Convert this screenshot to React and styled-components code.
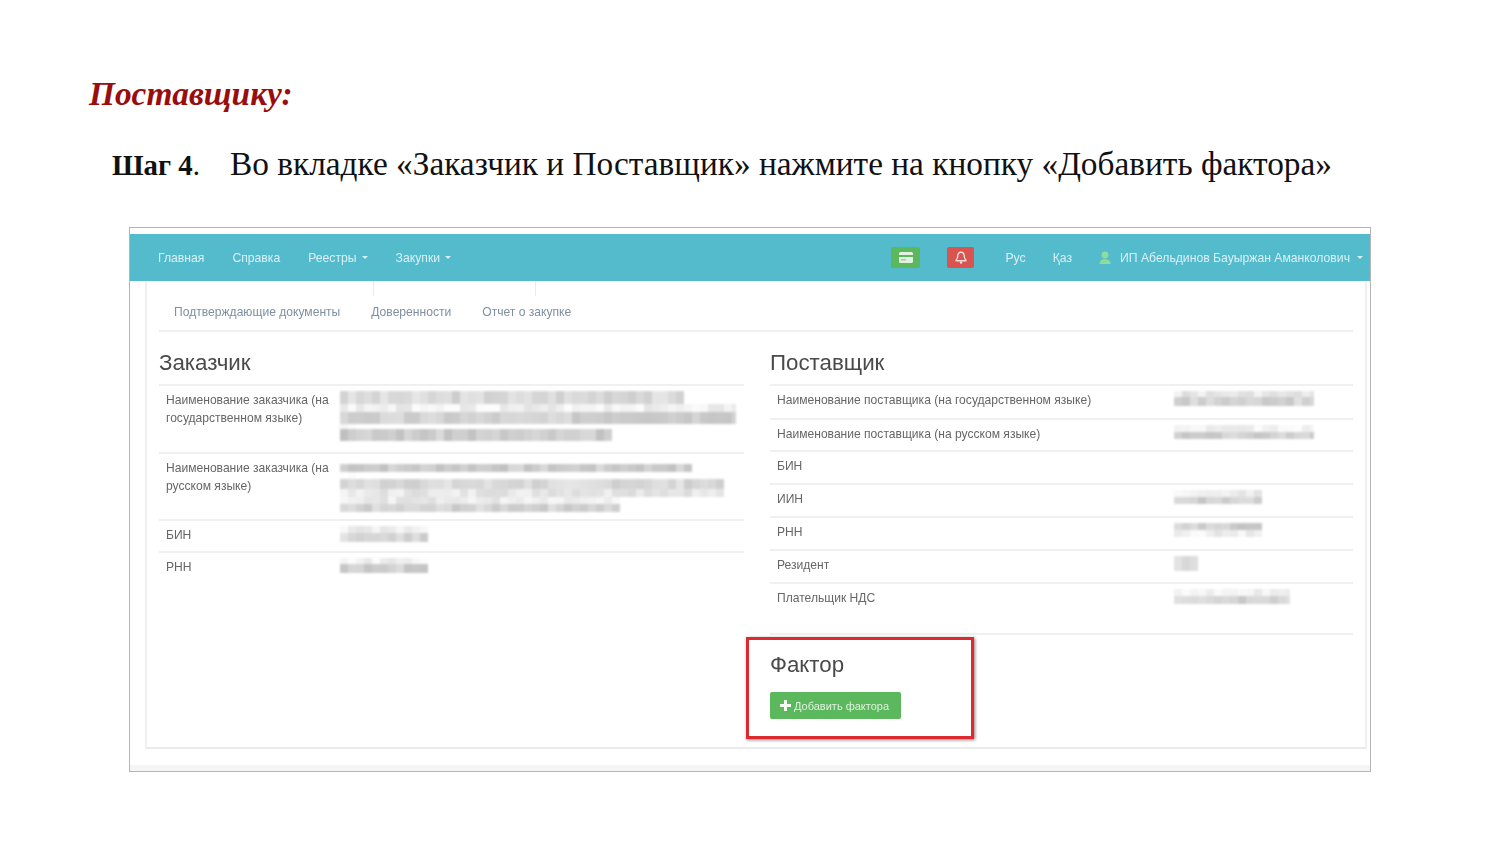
import React from "react";
import styled, { createGlobalStyle } from "styled-components";

const GlobalStyle = createGlobalStyle`
  html, body {
    margin: 0;
    padding: 0;
    background: #fff;
  }
`;

const Slide = styled.div`
  width: 1500px;
  height: 844px;
  overflow: hidden;
  box-sizing: border-box;
  padding: 74px 129px 0 89px;
  font-family: "Liberation Serif", serif;
  color: #111;
`;

const Heading = styled.h1`
  margin: 0;
  font-size: 33.33px;
  line-height: 40px;
  font-style: italic;
  font-weight: bold;
  color: #990d0d;
`;

const StepLine = styled.div`
  display: flex;
  align-items: baseline;
  margin: 30px 0 0 23px;
  font-size: 33.33px;
  line-height: 40px;
`;

const StepLabel = styled.span`
  width: 118px;
  flex: none;
  font-size: 28.8px;
  b {
    font-weight: bold;
  }
`;

const Shot = styled.div`
  width: 1242px;
  height: 545px;
  margin: 42px 0 0 40px;
  box-sizing: border-box;
  border: 1px solid #b5b5b5;
  padding-top: 6px;
  background: linear-gradient(#fff 0, #fff 537px, #f5f5f5 537px);
  font-family: "Liberation Sans", sans-serif;
  overflow: hidden;
`;

const Nav = styled.nav`
  height: 47px;
  background: #53bbcc;
  display: flex;
  align-items: center;
  padding: 0 7px 0 28px;
  font-size: 12.2px;
  color: #d9f0f4;
  filter: blur(0.55px);
`;

const NavItem = styled.span`
  margin-right: ${(p) => p.$gap ?? 28}px;
  margin-left: ${(p) => p.$left ?? 0}px;
  display: inline-flex;
  align-items: center;
  white-space: nowrap;
`;

const Caret = styled.i`
  display: inline-block;
  margin-left: ${(p) => p.$left ?? 5}px;
  border-top: 3.5px solid currentColor;
  border-left: 3.5px solid transparent;
  border-right: 3.5px solid transparent;
`;

const Spacer = styled.div`
  flex: 1;
`;

const Badge = styled.span`
  width: ${(p) => p.$w}px;
  height: 21px;
  margin-right: ${(p) => p.$gap}px;
  border-radius: 2px;
  background: ${(p) => p.$bg};
  display: flex;
  align-items: center;
  justify-content: center;
`;

const Panel = styled.div`
  width: 1222px;
  height: 468px;
  margin-left: 15px;
  box-sizing: border-box;
  border-left: 2px solid #efefef;
  border-right: 2px solid #efefef;
  border-bottom: 2px solid #ebebeb;
  padding: 0 12px 0 12px;
  filter: blur(0.5px);
`;

const Ticks = styled.div`
  height: 15px;
  display: flex;
`;

const Tick = styled.span`
  width: 1px;
  height: 15px;
  margin-left: ${(p) => p.$x}px;
  background: #e9ecef;
`;

const Tabs = styled.div`
  height: 36px;
  box-sizing: border-box;
  border-bottom: 2px solid #f0f0f0;
  display: flex;
  padding: 8px 0 0 15px;
  font-size: 12.1px;
  line-height: 16px;
  color: #7e8fa0;
`;

const Tab = styled.span`
  margin-right: 31px;
`;

const Columns = styled.div`
  display: grid;
  grid-template-columns: 585px 583px;
  column-gap: 26px;
`;

const Column = styled.section`
  position: relative;
`;

const SectionTitle = styled.h2`
  margin: 0;
  height: 52px;
  box-sizing: border-box;
  padding-top: ${(p) => p.$top ?? 17}px;
  font-size: 22.3px;
  line-height: 28px;
  font-weight: normal;
  color: #4a4a4a;
`;

const Row = styled.div`
  display: flex;
  box-sizing: border-box;
  height: ${(p) => p.$h}px;
  border-top: 2px solid #f0f0f0;
  font-size: 12.08px;
  line-height: 18px;
  color: #666;
`;

const Label = styled.div`
  width: ${(p) => p.$w}px;
  flex: none;
  padding: 5px 0 0 7px;
  box-sizing: border-box;
`;

const Value = styled.div`
  padding-top: ${(p) => p.$top ?? 5}px;
`;

const Closing = styled.div`
  height: 53px;
  box-sizing: border-box;
  border-top: 2px solid #f0f0f0;
  border-bottom: 2px solid #f0f0f0;
  padding: 5px 0 0 7px;
  font-size: 12.08px;
  line-height: 18px;
  color: #666;
  display: flex;
`;

const ClosingLabel = styled.span`
  width: 397px;
  flex: none;
`;

const AddButton = styled.button`
  display: flex;
  align-items: center;
  gap: 3px;
  width: 131px;
  height: 27px;
  margin-top: 5px;
  padding: 0 0 0 10px;
  border: 0;
  border-radius: 2px;
  background: #5cb85c;
  color: #dff1df;
  font-family: inherit;
  font-size: 11px;
`;

const Highlight = styled.div`
  position: absolute;
  left: -24px;
  top: 305px;
  width: 228px;
  height: 102px;
  box-sizing: border-box;
  border: 3px solid #dc2a2e;
  box-shadow: 1px 1px 3px rgba(60, 20, 20, 0.55);
  pointer-events: none;
`;

// blurred out values, a band is a line of mosaic cells
const CELL = 8;
const Blur = styled.svg`
  display: block;
  filter: blur(1.1px);
`;

const Mosaic = ({ bands, seed = 1, width }) => {
  let s = seed * 9301 + 49297;
  const rnd = () => {
    s = (s * 9301 + 49297) % 233280;
    return s / 233280;
  };
  const height = bands.reduce((sum, b) => sum + b.h, 0);
  let y = 0;
  const cells = [];
  bands.forEach((b, i) => {
    for (let x = b.x || 0; x < b.w; x += CELL) {
      const v = Math.round(b.tone + rnd() * 26 - 13);
      const fill = `rgb(${v},${v},${v})`;
      cells.push(
        <rect key={`${i}-${x}`} x={x} y={y} width={CELL} height={b.h} fill={fill} />
      );
    }
    y += b.h;
  });
  return (
    <Blur width={width} height={height} viewBox={`0 0 ${width} ${height}`}>
      {cells}
    </Blur>
  );
};

const CardIcon = () => (
  <svg width="14" height="11" viewBox="0 0 14 11">
    <rect x="0" y="0" width="14" height="11" rx="1.5" fill="#e3f2e0" />
    <rect x="0" y="3" width="14" height="2" fill="#5cb85c" />
    <rect x="2" y="7" width="5" height="1.5" fill="#9fd19f" />
  </svg>
);

const BellIcon = () => (
  <svg width="12" height="13" viewBox="0 0 12 13">
    <path
      d="M6 1.2c-2 0-3.2 1.5-3.2 3.4 0 2.3-.5 3.4-1.6 4.4v.8h9.6V9c-1.1-1-1.6-2.1-1.6-4.4C9.200 2.700 8 1.200 6 1.200z"
      fill="none"
      stroke="#f6dede"
      strokeWidth="1.400"
    />
    <circle cx="6" cy="11.500" r="1.200" fill="#f6dede" />
  </svg>
);

const UserIcon = () => (
  <svg width="14" height="14" viewBox="0 0 14 14">
    <circle cx="7" cy="4" r="3.400" fill="#8fdc9a" />
    <path d="M1.500 13c0-3.200 2.400-4.800 5.500-4.800s5.500 1.600 5.500 4.800z" fill="#8fdc9a" />
  </svg>
);

const PlusIcon = () => (
  <svg width="11" height="11" viewBox="0 0 11 11">
    <path d="M4 0h3v4h4v3H7v4H4V7H0V4h4z" fill="#f2faf2" />
  </svg>
);

const buyerRows = [
  {
    h: 68,
    label: "Наименование заказчика (на государственном языке)",
    seed: 3,
    bands: [
      { h: 13, w: 341, tone: 218 },
      { h: 8, w: 396, tone: 240 },
      { h: 12, w: 396, tone: 210 },
      { h: 5, w: 10, tone: 252 },
      { h: 12, w: 272, tone: 205 },
    ],
  },
  {
    h: 67,
    label: "Наименование заказчика (на русском языке)",
    seed: 7,
    top: 10,
    bands: [
      { h: 8, w: 349, tone: 205 },
      { h: 7, w: 10, tone: 252 },
      { h: 10, w: 381, tone: 218 },
      { h: 8, w: 381, tone: 232 },
      { h: 7, w: 280, tone: 235 },
      { h: 8, w: 280, tone: 212 },
    ],
  },
  {
    h: 32,
    label: "БИН",
    seed: 11,
    bands: [
      { h: 7, w: 86, tone: 238 },
      { h: 9, w: 86, tone: 215 },
    ],
  },
  {
    h: 33,
    label: "РНН",
    seed: 13,
    bands: [
      { h: 6, w: 86, tone: 242 },
      { h: 9, w: 86, tone: 208 },
    ],
  },
];

const supplierRows = [
  {
    label: "Наименование поставщика (на государственном языке)",
    h: 34,
    seed: 17,
    bands: [
      { h: 6, w: 140, tone: 232 },
      { h: 9, w: 140, tone: 212 },
    ],
  },
  {
    label: "Наименование поставщика (на русском языке)",
    h: 32,
    seed: 19,
    bands: [
      { h: 7, w: 140, tone: 240 },
      { h: 7, w: 140, tone: 210 },
    ],
  },
  { label: "БИН", h: 33 },
  {
    label: "ИИН",
    h: 33,
    seed: 23,
    bands: [
      { h: 7, w: 86, tone: 238 },
      { h: 7, w: 86, tone: 208 },
    ],
  },
  {
    label: "РНН",
    h: 33,
    seed: 29,
    bands: [
      { h: 7, w: 86, tone: 208 },
      { h: 7, w: 86, tone: 240 },
    ],
  },
  {
    label: "Резидент",
    h: 33,
    seed: 31,
    bands: [{ h: 15, w: 22, tone: 224 }],
  },
];

const App = () => (
  <Slide>
    <GlobalStyle />
    <Heading>Поставщику:</Heading>
    <StepLine>
      <StepLabel>
        <b>Шаг 4</b>.
      </StepLabel>
      <span>Во вкладке «Заказчик и Поставщик» нажмите на кнопку «Добавить фактора»</span>
    </StepLine>
    <Shot>
      <Nav>
        <NavItem>Главная</NavItem>
        <NavItem>Справка</NavItem>
        <NavItem>
          Реестры
          <Caret />
        </NavItem>
        <NavItem>
          Закупки
          <Caret />
        </NavItem>
        <Spacer />
        <Badge $w={29} $bg="#5cb85c" $gap={27}>
          <CardIcon />
        </Badge>
        <Badge $w={27} $bg="#d9534f" $gap={31}>
          <BellIcon />
        </Badge>
        <NavItem $gap={27}>Рус</NavItem>
        <NavItem $gap={26}>Қаз</NavItem>
        <UserIcon />
        <NavItem $gap={0} $left={8}>
          ИП Абельдинов Бауыржан Аманколович
          <Caret $left={7} />
        </NavItem>
      </Nav>
      <Panel>
        <Ticks>
          <Tick $x={214} />
          <Tick $x={161} />
        </Ticks>
        <Tabs>
          <Tab>Подтверждающие документы</Tab>
          <Tab>Доверенности</Tab>
          <Tab>Отчет о закупке</Tab>
        </Tabs>
        <Columns>
          <Column>
            <SectionTitle>Заказчик</SectionTitle>
            {buyerRows.map((r) => (
              <Row key={r.label} $h={r.h}>
                <Label $w={181}>{r.label}</Label>
                <Value $top={r.top}>
                  <Mosaic bands={r.bands} seed={r.seed} width={396} />
                </Value>
              </Row>
            ))}
          </Column>
          <Column>
            <SectionTitle>Поставщик</SectionTitle>
            {supplierRows.map((r) => (
              <Row key={r.label} $h={r.h}>
                <Label $w={404}>{r.label}</Label>
                <Value>
                  {r.bands && <Mosaic bands={r.bands} seed={r.seed} width={140} />}
                </Value>
              </Row>
            ))}
            <Closing>
              <ClosingLabel>Плательщик НДС</ClosingLabel>
              <Mosaic
                seed={37}
                width={116}
                bands={[
                  { h: 7, w: 116, tone: 238 },
                  { h: 8, w: 116, tone: 212 },
                ]}
              />
            </Closing>
            <SectionTitle $top={16}>Фактор</SectionTitle>
            <AddButton>
              <PlusIcon />
              Добавить фактора
            </AddButton>
            <Highlight />
          </Column>
        </Columns>
      </Panel>
    </Shot>
  </Slide>
);

export default App;
